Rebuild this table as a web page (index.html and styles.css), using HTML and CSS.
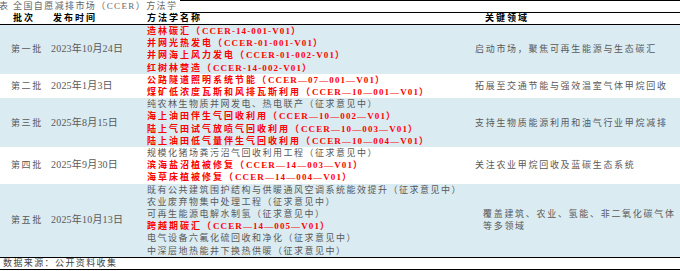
FILE: index.html
```html
<!DOCTYPE html>
<html lang="zh-CN">
<head>
<meta charset="UTF-8">
<meta name="viewport" content="width=device-width, initial-scale=1.0">
<title>全国自愿减排市场（CCER）方法学</title>
<link rel="stylesheet" href="styles.css">
</head>
<body>
<div class="sheet">
    <div class="caption">
        <span class="caption-text">表 全国自愿减排市场（CCER）方法学</span>
        <span class="caption-rule"></span>
    </div>
    <table class="methods">
        <colgroup>
            <col class="col-batch">
            <col class="col-date">
            <col class="col-name">
            <col class="col-field">
        </colgroup>
        <thead>
            <tr>
                <th class="batch">批次</th>
                <th class="date">发布时间</th>
                <th class="name">方法学名称</th>
                <th class="field">关键领域</th>
            </tr>
        </thead>
        <tbody>
            <tr class="shade">
                <td class="batch">第一批</td>
                <td class="date">2023年10月24日</td>
                <td class="name">
                    <div class="issued">造林碳汇（<span class="code">CCER-14-001-V01</span>）</div>
                    <div class="issued">并网光热发电（<span class="code">CCER-01-001-V01</span>）</div>
                    <div class="issued">并网海上风力发电（<span class="code">CCER-01-002-V01</span>）</div>
                    <div class="issued">红树林营造（<span class="code">CCER-14-002-V01</span>）</div>
                </td>
                <td class="field">启动市场，聚焦可再生能源与生态碳汇</td>
            </tr>
            <tr>
                <td class="batch">第二批</td>
                <td class="date">2025年1月3日</td>
                <td class="name">
                    <div class="issued">公路隧道照明系统节能（<span class="code">CCER—07—001—V01</span>）</div>
                    <div class="issued">煤矿低浓度瓦斯和风排瓦斯利用（<span class="code">CCER—10—001—V01</span>）</div>
                </td>
                <td class="field">拓展至交通节能与强效温室气体甲烷回收</td>
            </tr>
            <tr class="shade">
                <td class="batch">第三批</td>
                <td class="date">2025年8月15日</td>
                <td class="name">
                    <div class="draft">纯农林生物质并网发电、热电联产（征求意见中）</div>
                    <div class="issued">海上油田伴生气回收利用（<span class="code">CCER—10—002—V01</span>）</div>
                    <div class="issued">陆上气田试气放喷气回收利用（<span class="code">CCER—10—003—V01</span>）</div>
                    <div class="issued">陆上油田低气量伴生气回收利用（<span class="code">CCER—10—004—V01</span>）</div>
                </td>
                <td class="field">支持生物质能源利用和油气行业甲烷减排</td>
            </tr>
            <tr>
                <td class="batch">第四批</td>
                <td class="date">2025年9月30日</td>
                <td class="name">
                    <div class="draft">规模化猪场粪污沼气回收利用工程（征求意见中）</div>
                    <div class="issued">滨海盐沼植被修复（<span class="code">CCER—14—003—V01</span>）</div>
                    <div class="issued">海草床植被修复（<span class="code">CCER—14—004—V01</span>）</div>
                </td>
                <td class="field">关注农业甲烷回收及蓝碳生态系统</td>
            </tr>
            <tr class="shade">
                <td class="batch">第五批</td>
                <td class="date">2025年10月13日</td>
                <td class="name">
                    <div class="draft">既有公共建筑围护结构与供暖通风空调系统能效提升（征求意见中）</div>
                    <div class="draft">农业废弃物集中处理工程（征求意见中）</div>
                    <div class="draft">可再生能源电解水制氢（征求意见中）</div>
                    <div class="issued">跨越期碳汇（<span class="code">CCER—14—005—V01</span>）</div>
                    <div class="draft">电气设备六氟化硫回收和净化（征求意见中）</div>
                    <div class="draft">中深层地热能井下换热供暖（征求意见中）</div>
                </td>
                <td class="field wide">覆盖建筑、农业、氢能、非二氧化碳气体等多领域</td>
            </tr>
        </tbody>
    </table>
    <div class="source">数据来源：公开资料收集</div>
</div>
</body>
</html>
```

FILE: styles.css
```css
body {
    margin: 0;
    background: #fff;
    font-family: "Liberation Serif", "Noto Sans CJK SC", serif;
    font-size: 9px;
    color: #595959;
}
.sheet {
    width: 680px;
    overflow: hidden;
}
.caption {
    display: flex;
    height: 13px;
}
.caption-text {
    margin-left: -1px;
    padding-top: 1px;
    line-height: 11px;
    letter-spacing: 1.4px;
    white-space: nowrap;
    color: #666;
}
.caption-rule {
    flex: 1;
    margin-left: 3px;
    border-top: 1px solid #000;
    border-bottom: 1px solid #000;
}
table.methods {
    width: 680px;
    border-collapse: collapse;
    table-layout: fixed;
}
.col-batch { width: 48px; }
.col-date { width: 96px; }
.col-name { width: 328px; }
.col-field { width: 208px; }
th, td {
    padding: 0 0 0 3px;
    text-align: left;
    white-space: nowrap;
}
th {
    height: 11px;
    line-height: 11px;
    font-weight: bold;
    color: #000;
    letter-spacing: 2px;
    border-bottom: 1px solid #000;
}
th.batch { padding-left: 13px; }
th.date { padding-left: 5px; }
th.field { padding-left: 13px; }
td {
    line-height: 12.2px;
    vertical-align: middle;
    letter-spacing: 1.5px;
}
tbody tr:last-child td {
    border-bottom: 1px solid #000;
}
tr.shade td {
    background-color: #daebf2;
}
td.batch {
    padding-left: 11px;
    letter-spacing: 1.6px;
}
td.date {
    font-size: 10px;
    letter-spacing: 0.2px;
}
td.name {
    vertical-align: top;
}
td.field {
    letter-spacing: 1.7px;
}
td.wide {
    padding-left: 11px;
    white-space: normal;
}
.issued {
    color: #ff0000;
    font-weight: bold;
    letter-spacing: 2px;
}
.issued .code {
    letter-spacing: 1.1px;
}
.draft {
    color: #595959;
}
.source {
    height: 11px;
    padding-left: 3px;
    line-height: 11px;
    letter-spacing: 1.4px;
    color: #444;
    border-bottom: 1px solid #000;
}
```
